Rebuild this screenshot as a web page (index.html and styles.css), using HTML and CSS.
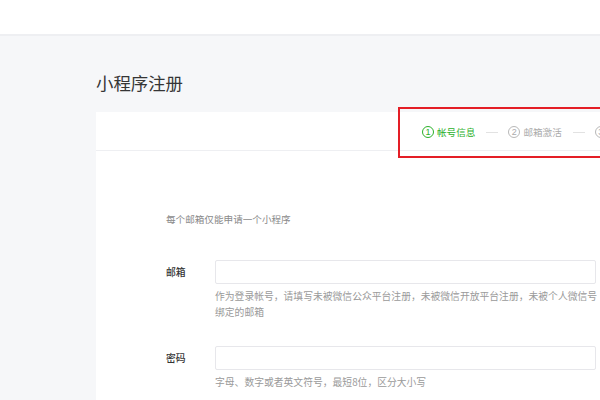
FILE: index.html
```html
<!DOCTYPE html>
<html lang="zh-CN">
<head>
<meta charset="utf-8">
<title>小程序注册</title>
<link rel="stylesheet" href="styles.css">
</head>
<body>
<header class="topbar"></header>
<main class="main">
  <h1 class="title">小程序注册</h1>
  <section class="card">
    <div class="card-head">
      <div class="steps">
        <div class="step active"><span class="num">1</span><span class="step-text">帐号信息</span></div>
        <span class="sep"></span>
        <div class="step"><span class="num">2</span><span class="step-text">邮箱激活</span></div>
        <span class="sep"></span>
        <div class="step"><span class="num">3</span><span class="step-text">信息登记</span></div>
      </div>
    </div>
    <div class="card-body">
      <p class="intro">每个邮箱仅能申请一个小程序</p>
      <div class="field">
        <div class="row">
          <label class="label">邮箱</label>
          <input class="input" type="text">
        </div>
        <p class="help">作为登录帐号，请填写未被微信公众平台注册，未被微信开放平台注册，未被个人微信号绑定的邮箱</p>
      </div>
      <div class="field pw">
        <div class="row">
          <label class="label">密码</label>
          <input class="input" type="password">
        </div>
        <p class="help">字母、数字或者英文符号，最短8位，区分大小写</p>
      </div>
    </div>
  </section>
</main>
<div class="highlight"></div>
</body>
</html>
```
FILE: styles.css
```css
html, body {
  margin: 0;
  padding: 0;
  overflow: hidden;
  width: 600px;
  height: 400px;
}
body {
  background: #f6f7f9;
  font-family: "Noto Sans CJK SC", "Noto Sans", sans-serif;
  color: #353535;
  position: relative;
}
.topbar {
  height: 34px;
  background: #fff;
  border-bottom: 2px solid #eeeff2;
}
.main {
  padding-left: 96px;
}
.title {
  margin: 35px 0 0;
  font-size: 17.4px;
  line-height: 24px;
  font-weight: 400;
  color: #353535;
}
.card {
  margin-top: 17px;
  width: 540px;
  background: #fff;
}
.card-head {
  height: 39px;
  border-bottom: 1px solid #eeeff2;
  display: flex;
  align-items: center;
  padding-left: 326px;
  padding-top: 2px;
  box-sizing: border-box;
}
.steps {
  display: flex;
  align-items: center;
  white-space: nowrap;
}
.step {
  display: flex;
  align-items: center;
  gap: 3px;
  color: #ababab;
  font-size: 9.6px;
}
.num {
  width: 10px;
  height: 10px;
  border: 1px solid #b8b8b8;
  border-radius: 50%;
  display: flex;
  align-items: center;
  justify-content: center;
  font-family: "Liberation Sans", sans-serif;
  font-size: 9px;
  line-height: 1;
  color: #ababab;
}
.step.active { color: #2bb02a; }
.step.active .num { border-color: #2bb02a; color: #2bb02a; }
.sep {
  width: 12px;
  height: 1px;
  background: #e2e2e2;
  margin: 0 10px 0 11px;
}
.card-body {
  padding: 60px 0 40px 70px;
}
.intro {
  margin: 0;
  font-size: 9.6px;
  line-height: 16px;
  color: #8a8a8a;
}
.field {
  margin-top: 33px;
}
.field.pw {
  margin-top: 26px;
}
.row {
  display: flex;
  align-items: center;
}
.label {
  width: 49px;
  font-size: 9.8px;
  color: #353535;
  font-weight: 500;
}
.input {
  width: 381px;
  height: 24px;
  box-sizing: border-box;
  border: 1px solid #e7e7eb;
  border-radius: 2px;
  background: #fff;
  margin: 0;
  padding: 0 8px;
}
.help {
  margin: 4px 0 0 49px;
  width: 386px;
  font-size: 9.8px;
  line-height: 16px;
  color: #9a9a9a;
}
.highlight {
  position: absolute;
  left: 398px;
  top: 107px;
  width: 240px;
  height: 51px;
  box-sizing: border-box;
  border: 2px solid #e41e26;
}
```
